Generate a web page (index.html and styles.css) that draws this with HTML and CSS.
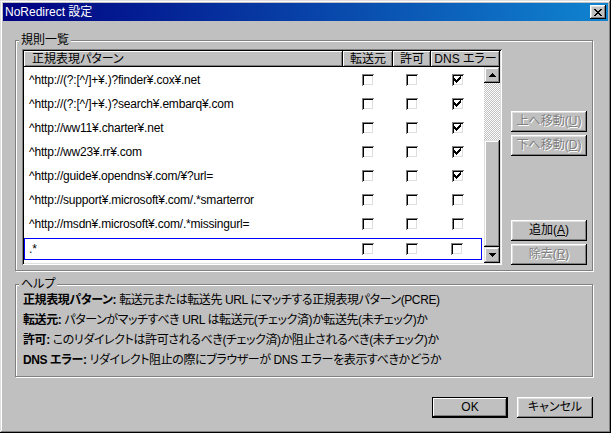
FILE: index.html
```html
<!DOCTYPE html>
<html lang="ja">
<head>
<meta charset="utf-8">
<title>NoRedirect 設定</title>
<link rel="stylesheet" href="styles.css">
</head>
<body>
<svg class="defs" width="0" height="0" aria-hidden="true">
  <defs>
    <g id="chk">
      <rect x="8" y="2" width="1" height="1"/>
      <rect x="7" y="3" width="2" height="1"/>
      <rect x="2" y="4" width="1" height="1"/><rect x="6" y="4" width="3" height="1"/>
      <rect x="2" y="5" width="2" height="1"/><rect x="5" y="5" width="3" height="1"/>
      <rect x="2" y="6" width="5" height="1"/>
      <rect x="3" y="7" width="3" height="1"/>
      <rect x="4" y="8" width="1" height="1"/>
    </g>
  </defs>
</svg>
<div class="window">
  <div class="titlebar">
    <span class="title">NoRedirect 設定</span>
    <button class="close" type="button" aria-label="閉じる">
      <svg width="8" height="7" viewBox="0 0 8 7" shape-rendering="crispEdges">
        <rect x="0" y="0" width="2" height="1"/><rect x="6" y="0" width="2" height="1"/>
        <rect x="1" y="1" width="2" height="1"/><rect x="5" y="1" width="2" height="1"/>
        <rect x="2" y="2" width="4" height="1"/>
        <rect x="3" y="3" width="2" height="1"/>
        <rect x="2" y="4" width="4" height="1"/>
        <rect x="1" y="5" width="2" height="1"/><rect x="5" y="5" width="2" height="1"/>
        <rect x="0" y="6" width="2" height="1"/><rect x="6" y="6" width="2" height="1"/>
      </svg>
    </button>
  </div>
  <div class="client">
    <fieldset class="group rules">
      <legend>規則一覧</legend>
      <div class="rules-body">
        <div class="listview">
          <div class="lv-header">
            <div class="hcell pat">正規表現パターン</div>
            <div class="hcell">転送元</div>
            <div class="hcell">許可</div>
            <div class="hcell">DNS エラー</div>
          </div>
          <div class="lv-body">
            <div class="rows">
              <div class="row">
                <span class="pattern">^http://(?:[^/]+¥.)?finder¥.cox¥.net</span>
                <span class="cell"><span class="cb"></span></span>
                <span class="cell"><span class="cb"></span></span>
                <span class="cell"><span class="cb"><svg viewBox="0 0 12 12" shape-rendering="crispEdges"><use href="#chk"/></svg></span></span>
              </div>
              <div class="row">
                <span class="pattern">^http://(?:[^/]+¥.)?search¥.embarq¥.com</span>
                <span class="cell"><span class="cb"></span></span>
                <span class="cell"><span class="cb"></span></span>
                <span class="cell"><span class="cb"><svg viewBox="0 0 12 12" shape-rendering="crispEdges"><use href="#chk"/></svg></span></span>
              </div>
              <div class="row">
                <span class="pattern">^http://ww11¥.charter¥.net</span>
                <span class="cell"><span class="cb"></span></span>
                <span class="cell"><span class="cb"></span></span>
                <span class="cell"><span class="cb"><svg viewBox="0 0 12 12" shape-rendering="crispEdges"><use href="#chk"/></svg></span></span>
              </div>
              <div class="row">
                <span class="pattern">^http://ww23¥.rr¥.com</span>
                <span class="cell"><span class="cb"></span></span>
                <span class="cell"><span class="cb"></span></span>
                <span class="cell"><span class="cb"><svg viewBox="0 0 12 12" shape-rendering="crispEdges"><use href="#chk"/></svg></span></span>
              </div>
              <div class="row">
                <span class="pattern">^http://guide¥.opendns¥.com/¥?url=</span>
                <span class="cell"><span class="cb"></span></span>
                <span class="cell"><span class="cb"></span></span>
                <span class="cell"><span class="cb"><svg viewBox="0 0 12 12" shape-rendering="crispEdges"><use href="#chk"/></svg></span></span>
              </div>
              <div class="row">
                <span class="pattern">^http://support¥.microsoft¥.com/.*smarterror</span>
                <span class="cell"><span class="cb"></span></span>
                <span class="cell"><span class="cb"></span></span>
                <span class="cell"><span class="cb"></span></span>
              </div>
              <div class="row">
                <span class="pattern">^http://msdn¥.microsoft¥.com/.*missingurl=</span>
                <span class="cell"><span class="cb"></span></span>
                <span class="cell"><span class="cb"></span></span>
                <span class="cell"><span class="cb"></span></span>
              </div>
              <div class="row sel">
                <span class="pattern">.*</span>
                <span class="cell"><span class="cb"></span></span>
                <span class="cell"><span class="cb"></span></span>
                <span class="cell"><span class="cb"></span></span>
              </div>
            </div>
            <div class="scrollbar">
              <div class="sb-btn">
                <svg width="7" height="4" viewBox="0 0 7 4" shape-rendering="crispEdges">
                  <rect x="3" y="0" width="1" height="1"/><rect x="2" y="1" width="3" height="1"/>
                  <rect x="1" y="2" width="5" height="1"/><rect x="0" y="3" width="7" height="1"/>
                </svg>
              </div>
              <div class="sb-track"></div>
              <div class="sb-thumb"></div>
              <div class="sb-btn">
                <svg width="7" height="4" viewBox="0 0 7 4" shape-rendering="crispEdges">
                  <rect x="0" y="0" width="7" height="1"/><rect x="1" y="1" width="5" height="1"/>
                  <rect x="2" y="2" width="3" height="1"/><rect x="3" y="3" width="1" height="1"/>
                </svg>
              </div>
            </div>
          </div>
        </div>
        <div class="side">
          <div class="btn-group">
            <button class="btn" type="button" disabled>上へ移動(<u>U</u>)</button>
            <button class="btn" type="button" disabled>下へ移動(<u>D</u>)</button>
          </div>
          <div class="btn-group">
            <button class="btn" type="button">追加(<u>A</u>)</button>
            <button class="btn" type="button" disabled>除去(<u>R</u>)</button>
          </div>
        </div>
      </div>
    </fieldset>
    <fieldset class="group help">
      <legend>ヘルプ</legend>
      <div class="help-body">
        <p><b>正規表現パターン:</b> 転送元または転送先 URL にマッチする正規表現パターン(PCRE)</p>
        <p><b>転送元:</b> パターンがマッチすべき URL は転送元(チェック済)か転送先(未チェック)か</p>
        <p><b>許可:</b> このリダイレクトは許可されるべき(チェック済)か阻止されるべき(未チェック)か</p>
        <p><b>DNS エラー:</b> リダイレクト阻止の際にブラウザーが DNS エラーを表示すべきかどうか</p>
      </div>
    </fieldset>
    <div class="footer">
      <button class="btn default" type="button">OK</button>
      <button class="btn" type="button">キャンセル</button>
    </div>
  </div>
</div>
</body>
</html>
```
FILE: styles.css
```css
* { box-sizing: border-box; }
html, body { margin: 0; padding: 0; }
body {
  background: #c0c0c0;
  font-family: "Liberation Sans", "Noto Sans CJK JP", sans-serif;
  font-size: 12px;
  color: #000;
  font-feature-settings: "palt" 1;
}
.defs { position: absolute; width: 0; height: 0; overflow: hidden; }

.window {
  width: 611px;
  height: 433px;
  padding: 3px;
  display: flex;
  flex-direction: column;
  background: #c0c0c0;
  box-shadow: inset -1px -1px #000, inset 1px 1px #dfdfdf, inset -2px -2px #808080, inset 2px 2px #fff;
}

.titlebar {
  height: 18px;
  flex: none;
  display: flex;
  align-items: center;
  justify-content: space-between;
  padding: 0 2px;
  background: linear-gradient(90deg, #000080, #1084d0);
  color: #fff;
}
.title { line-height: 18px; white-space: nowrap; }
.close {
  width: 16px;
  height: 14px;
  padding: 0;
  border: 0;
  background: #c0c0c0;
  display: flex;
  align-items: center;
  justify-content: center;
  box-shadow: inset -1px -1px #000, inset 1px 1px #fff, inset -2px -2px #808080, inset 2px 2px #dfdfdf;
}
.close svg { display: block; fill: #000; }

.client {
  flex: 1;
  display: flex;
  flex-direction: column;
  padding: 12px 15px 0 12px;
}

.group {
  margin: 0;
  min-inline-size: 0;
  width: 578px;
  border: 1px solid #808080;
  box-shadow: inset 1px 1px #fff, 1px 1px #fff;
}
.group legend {
  padding: 0 2px;
  height: 15px;
  line-height: 15px;
  background: #c0c0c0;
  white-space: nowrap;
}
.rules { padding: 1px 5px 5px 6px; }
.rules legend { margin-left: -3px; }
.help { margin-top: 6px; padding: 0 7px 8px 7px; }
.help legend { margin-left: -4px; }

.rules-body { display: flex; }

.listview {
  width: 480px;
  height: 216px;
  flex: none;
  padding: 2px;
  background: #fff;
  display: flex;
  flex-direction: column;
  box-shadow: inset 1px 1px #808080, inset -1px -1px #fff, inset 2px 2px #000, inset -2px -2px #dfdfdf;
}
.lv-header {
  display: grid;
  grid-template-columns: 319px 50px 38px 1fr;
  height: 16px;
  flex: none;
}
.hcell {
  background: #c0c0c0;
  line-height: 16px;
  text-align: center;
  white-space: nowrap;
  overflow: hidden;
  box-shadow: inset -1px -1px #000, inset 1px 1px #fff, inset -2px -2px #808080;
}
.hcell.pat { text-align: left; padding-left: 8px; }

.lv-body { display: flex; flex: 1; }
.rows { width: 460px; padding-top: 1px; }
.row {
  display: grid;
  grid-template-columns: 319px 50px 38px 1fr;
  align-items: center;
  height: 24px;
}
.row.sel {
  height: 22px;
  margin: 2px 2px 0 0;
  box-shadow: inset 0 0 0 1px #0000ff;
}
.pattern { padding-left: 5px; white-space: nowrap; overflow: hidden; letter-spacing: -0.2px; }
.cell { display: flex; justify-content: center; }
.cb {
  display: block;
  width: 12px;
  height: 12px;
  background: #fff;
  box-shadow: inset 1px 1px #808080, inset -1px -1px #fff, inset 2px 2px #000, inset -2px -2px #dfdfdf;
}
.cb svg { display: block; width: 12px; height: 12px; fill: #000; }

.scrollbar { width: 16px; display: flex; flex-direction: column; }
.sb-btn {
  height: 16px;
  flex: none;
  background: #c0c0c0;
  display: flex;
  align-items: center;
  justify-content: center;
  box-shadow: inset -1px -1px #000, inset 1px 1px #dfdfdf, inset -2px -2px #808080, inset 2px 2px #fff;
}
.sb-btn svg { display: block; fill: #000; }
.sb-track {
  height: 57px;
  flex: none;
  background: repeating-conic-gradient(#fff 0 25%, #c0c0c0 0 50%) 0 0 / 2px 2px;
}
.sb-thumb {
  flex: 1;
  background: #c0c0c0;
  box-shadow: inset -1px -1px #000, inset 1px 1px #dfdfdf, inset -2px -2px #808080, inset 2px 2px #fff;
}

.side {
  margin-left: 9px;
  padding-top: 62px;
  display: flex;
  flex-direction: column;
  justify-content: space-between;
}
.btn-group { display: flex; flex-direction: column; gap: 3px; }

.btn {
  width: 76px;
  height: 21px;
  padding: 0;
  border: 0;
  font: inherit;
  color: #000;
  line-height: 21px;
  text-align: center;
  white-space: nowrap;
  background: #c0c0c0;
  box-shadow: inset -1px -1px #000, inset 1px 1px #fff, inset -2px -2px #808080, inset 2px 2px #dfdfdf;
}
.btn:disabled { color: #808080; text-shadow: 1px 1px 0 #fff; }
.btn.default {
  box-shadow: inset 0 0 0 1px #000, inset -2px -2px #000, inset 2px 2px #fff, inset -3px -3px #808080;
}

.help-body { display: flex; flex-direction: column; gap: 4px; }
.help-body p { margin: 0; height: 16px; line-height: 16px; white-space: nowrap; letter-spacing: -0.4px; }

.footer {
  display: flex;
  justify-content: flex-end;
  gap: 9px;
  margin-top: 20px;
}
```
